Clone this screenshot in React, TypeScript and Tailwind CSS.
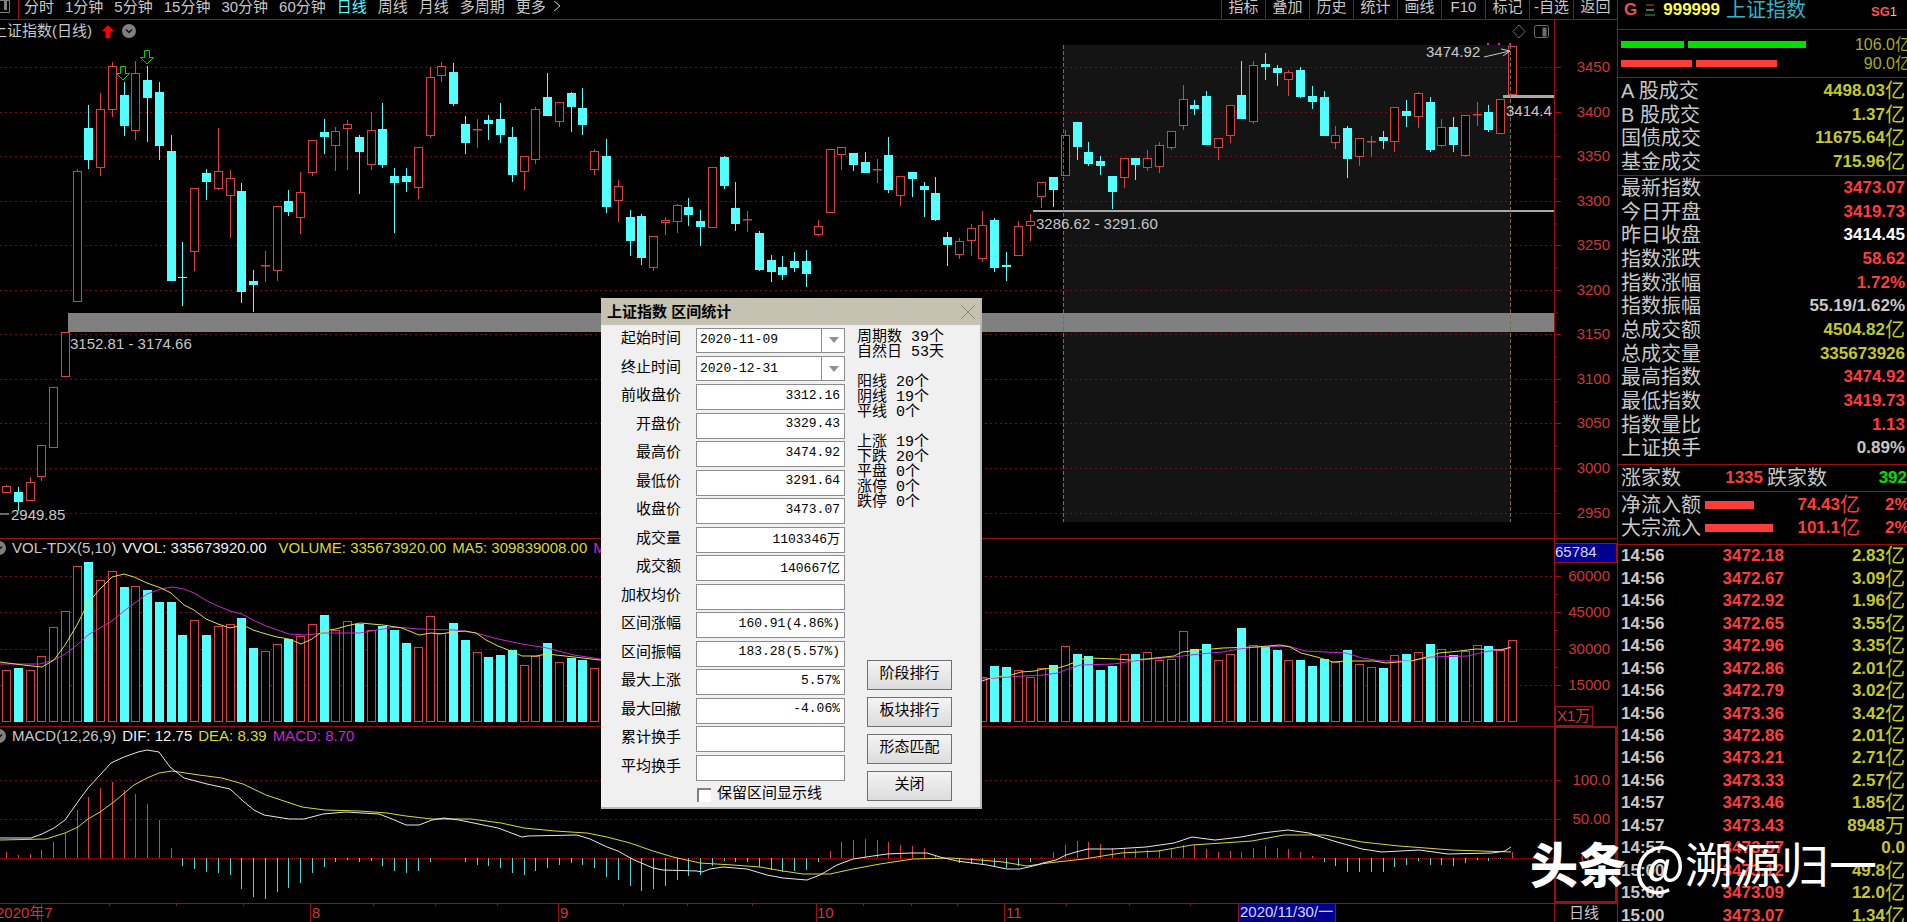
import { useState } from "react";

const UP = "#d94040";
const DOWN = "#54ffff";
const LINE = "#9a1010";
const GRID = "#6e1018";
const AXIS = "#cc3838";

const FIRST_X = 6;
const STEP = 11.765;

// [rising, high, body top, body bottom, low]
const candles = [
  [1, 485, 486, 493, 493], [0, 487, 492, 502, 511], [1, 477, 482, 501, 501], [1, 445, 445, 477, 481],
  [1, 387, 387, 448, 448], [1, 332, 332, 377, 377], [1, 169, 171, 302, 302], [0, 105, 128, 160, 169],
  [1, 93, 109, 168, 176], [1, 62, 66, 110, 117], [0, 82, 95, 126, 136], [1, 61, 73, 131, 140],
  [0, 66, 80, 98, 142], [0, 82, 92, 146, 160], [0, 135, 151, 281, 281], [0, 242, 277, 278, 306],
  [1, 188, 188, 252, 271], [0, 169, 173, 182, 200], [1, 128, 171, 189, 190], [1, 170, 178, 196, 238],
  [0, 183, 191, 292, 303], [0, 270, 281, 285, 312], [1, 251, 265, 267, 282], [1, 206, 206, 271, 281],
  [0, 190, 201, 212, 216], [1, 172, 192, 218, 234], [1, 140, 140, 173, 176], [0, 119, 132, 137, 154],
  [1, 127, 131, 146, 171], [1, 120, 124, 129, 170], [0, 135, 137, 152, 194], [1, 112, 130, 165, 170],
  [0, 103, 129, 165, 168], [0, 168, 176, 183, 233], [0, 168, 176, 182, 192], [1, 147, 147, 188, 199],
  [1, 67, 77, 136, 138], [1, 62, 66, 76, 82], [0, 63, 72, 104, 106], [0, 116, 124, 143, 154],
  [1, 119, 129, 131, 148], [0, 115, 120, 124, 140], [0, 103, 119, 135, 143], [0, 127, 137, 175, 182],
  [1, 156, 156, 172, 190], [1, 107, 109, 160, 164], [0, 73, 97, 116, 116], [1, 102, 102, 122, 127],
  [0, 92, 93, 107, 132], [0, 88, 108, 125, 135], [1, 149, 151, 170, 175], [0, 139, 156, 207, 213],
  [1, 180, 186, 201, 222], [0, 210, 217, 241, 256], [0, 214, 216, 258, 265], [1, 236, 236, 268, 271],
  [1, 217, 220, 223, 235], [1, 204, 205, 222, 233], [0, 198, 207, 215, 226], [0, 210, 221, 227, 246],
  [1, 167, 167, 228, 228], [0, 156, 157, 186, 189], [0, 182, 208, 224, 231], [1, 211, 219, 220, 232],
  [0, 231, 233, 270, 271], [0, 255, 260, 272, 282], [0, 256, 267, 275, 280], [0, 252, 261, 268, 272],
  [0, 250, 261, 274, 287], [1, 220, 226, 235, 236], [1, 149, 149, 213, 213], [1, 147, 147, 155, 170],
  [0, 153, 153, 165, 171], [0, 152, 162, 173, 173], [1, 159, 169, 171, 183], [0, 137, 155, 190, 193],
  [1, 176, 176, 196, 206], [0, 172, 172, 179, 197], [0, 182, 186, 190, 217], [0, 177, 193, 220, 221],
  [0, 232, 237, 245, 266], [1, 238, 241, 255, 259], [1, 224, 228, 241, 256], [1, 211, 225, 259, 262],
  [0, 218, 220, 268, 272], [0, 252, 265, 267, 281], [1, 221, 226, 256, 256], [1, 214, 221, 226, 241],
  [1, 182, 182, 197, 208], [0, 177, 177, 190, 207], [1, 130, 135, 176, 176], [0, 122, 122, 147, 160],
  [0, 142, 152, 164, 166], [0, 156, 161, 166, 175], [0, 176, 176, 192, 209], [1, 158, 158, 178, 188],
  [0, 158, 158, 165, 180], [1, 150, 158, 168, 171], [1, 142, 145, 167, 173], [1, 131, 131, 148, 150],
  [1, 85, 99, 126, 130], [0, 100, 105, 109, 115], [0, 91, 96, 145, 145], [1, 138, 138, 148, 160],
  [1, 105, 105, 136, 143], [0, 61, 95, 119, 119], [1, 61, 65, 122, 124], [0, 53, 64, 67, 80],
  [0, 65, 68, 73, 86], [1, 70, 72, 80, 96], [0, 67, 70, 97, 98], [0, 86, 96, 102, 109],
  [0, 91, 97, 136, 136], [1, 126, 135, 143, 149], [0, 126, 128, 159, 178], [1, 138, 138, 157, 166],
  [1, 136, 141, 142, 157], [0, 131, 137, 141, 149], [1, 107, 107, 142, 152], [0, 100, 111, 116, 127],
  [1, 92, 93, 117, 128], [0, 97, 102, 150, 152], [1, 119, 127, 146, 147], [0, 117, 127, 145, 152],
  [1, 115, 115, 156, 157], [1, 102, 114, 115, 126], [0, 105, 112, 130, 132], [1, 99, 99, 134, 134],
  [1, 46, 46, 95, 95],
];

const volumes = [
  670, 668, 670, 656, 627, 611, 566, 562, 580, 571, 587, 586, 590, 602, 602, 635, 620, 635, 626, 624,
  618, 648, 651, 644, 639, 636, 624, 615, 630, 621, 624, 630, 626, 630, 643, 647, 616, 633, 623, 640,
  652, 657, 655, 650, 665, 656, 643, 662, 658, 660, 668, 655, 664, 658, 650, 668, 672, 668, 670, 672,
  655, 660, 668, 674, 660, 672, 678, 680, 676, 670, 645, 655, 662, 664, 670, 655, 662, 668, 672, 660,
  668, 680, 676, 677, 666, 667, 670, 677, 668, 665, 646, 654, 656, 670, 666, 654, 654, 652, 660, 659,
  631, 649, 644, 660, 654, 628, 645, 647, 650, 660, 660, 666, 659, 662, 650, 664, 667, 668, 655, 654,
  652, 644, 649, 655, 651, 645, 646, 650, 640,
];

const macdEnds = [
  852, 855, 854, 850, 842, 833, 810, 797, 788, 782, 790, 794, 804, 820, 848, 866, 869, 872, 873, 875,
  889, 897, 899, 892, 888, 883, 873, 867, 862, 860, 862, 861, 866, 871, 873, 871, 862, 858, 858, 862,
  865, 866, 868, 873, 875, 871, 868, 865, 863, 865, 868, 877, 880, 886, 891, 889, 886, 880, 876, 875,
  866, 861, 862, 862, 867, 870, 872, 871, 870, 862, 851, 842, 840, 839, 840, 842, 845, 846, 848, 856,
  859, 863, 864, 864, 867, 868, 866, 862, 857, 852, 845, 841, 842, 844, 848, 848, 849, 850, 850, 849,
  845, 845, 849, 852, 851, 852, 848, 846, 848, 849, 852, 856, 862, 866, 872, 872, 872, 872, 867, 865,
  861, 865, 865, 866, 863, 860, 861, 859, 852,
];

const ma5 =
  "0,662 23,665 42,667 54,660 65,645 77,625 88,603 100,589 112,577 124,574 134,577 147,583 161,588 171,593 184,605 194,610 206,619 218,624 230,628 243,625 253,630 266,634 277,637 289,639 301,644 312,639 323,631 336,629 346,626 360,623 383,625 402,628 419,635 431,633 440,634 453,632 465,631 476,633 486,640 498,646 511,651 522,656 536,656 547,654 574,657 600,660 700,664 820,668 900,664 982,681 994,677 1011,675 1021,672 1035,671 1043,669 1058,668 1068,665 1082,659 1090,658 1117,659 1129,660 1146,659 1174,656 1182,652 1199,650 1223,648 1256,647 1280,645 1290,647 1301,653 1317,657 1333,662 1346,661 1374,661 1386,663 1411,661 1423,658 1439,653 1460,651 1476,649 1501,650 1511,647";
const ma10 =
  "0,664 40,664 54,660 65,654 77,645 88,635 100,628 112,621 124,611 136,602 147,594 161,589 172,587 184,589 194,593 207,601 218,606 230,611 242,614 253,620 266,626 289,634 306,635 323,633 360,633 371,631 383,629 396,627 419,629 455,630 476,633 498,639 522,644 547,648 574,655 600,659 700,664 820,670 900,668 982,679 1023,676 1043,675 1058,673 1068,669 1080,665 1113,664 1141,660 1174,657 1199,654 1223,652 1239,649 1256,647 1288,646 1305,651 1346,653 1362,658 1382,661 1411,661 1431,657 1468,656 1484,652 1511,648";
const dif =
  "0,838 31,838 42,834 54,828 65,820 77,803 88,788 100,775 111,763 124,757 138,752 147,750 159,752 170,767 184,778 207,784 230,789 243,801 254,810 264,815 289,819 304,819 323,814 346,812 379,814 392,819 406,825 419,825 432,820 444,818 459,820 498,828 522,837 528,836 577,835 590,839 607,847 618,851 632,859 653,868 663,870 697,871 702,872 710,869 723,867 747,869 767,875 783,878 807,880 820,875 837,865 853,859 873,856 887,854 910,853 927,853 940,857 957,861 987,865 1007,869 1020,869 1037,865 1043,863 1056,860 1066,855 1076,852 1088,849 1113,849 1146,847 1174,843 1192,837 1215,840 1241,837 1262,833 1288,830 1309,833 1321,837 1337,842 1362,849 1382,852 1419,850 1448,854 1492,853 1505,851 1511,847";
const dea =
  "0,840 46,839 65,833 78,827 88,819 100,812 115,801 134,785 147,778 159,773 172,771 199,775 222,778 243,784 266,795 302,807 325,810 360,811 387,813 406,816 432,819 471,819 501,823 524,828 555,831 587,833 607,837 630,843 653,851 673,857 700,863 733,865 760,867 783,871 803,874 830,874 853,869 880,864 913,859 950,858 980,860 1003,862 1027,866 1048,863 1084,859 1121,853 1158,851 1192,845 1252,841 1284,835 1325,835 1362,842 1399,846 1452,850 1511,852";

const periods = ["分时", "1分钟", "5分钟", "15分钟", "30分钟", "60分钟", "日线", "周线", "月线", "多周期", "更多"];
const tools = ["指标", "叠加", "历史", "统计", "画线", "F10", "标记", "-自选", "返回"];

const turnover = [
  ["A 股成交", "4498.03", "亿"],
  ["B 股成交", "1.37", "亿"],
  ["国债成交", "11675.64", "亿"],
  ["基金成交", "715.96", "亿"],
];

const quotes = [
  ["最新指数", "3473.07", "", "text-[#ff3c3c]"],
  ["今日开盘", "3419.73", "", "text-[#ff3c3c]"],
  ["昨日收盘", "3414.45", "", "text-white"],
  ["指数涨跌", "58.62", "", "text-[#ff3c3c]"],
  ["指数涨幅", "1.72%", "", "text-[#ff3c3c]"],
  ["指数振幅", "55.19/1.62%", "", "text-[#c8c8c8]"],
  ["总成交额", "4504.82", "亿", "text-[#c4c828]"],
  ["总成交量", "335673926", "", "text-[#c4c828]"],
  ["最高指数", "3474.92", "", "text-[#ff3c3c]"],
  ["最低指数", "3419.73", "", "text-[#ff3c3c]"],
  ["指数量比", "1.13", "", "text-[#ff3c3c]"],
  ["上证换手", "0.89%", "", "text-[#c8c8c8]"],
];

const ticks = [
  ["14:56", "3472.18", "2.83", "亿"],
  ["14:56", "3472.67", "3.09", "亿"],
  ["14:56", "3472.92", "1.96", "亿"],
  ["14:56", "3472.65", "3.55", "亿"],
  ["14:56", "3472.96", "3.35", "亿"],
  ["14:56", "3472.86", "2.01", "亿"],
  ["14:56", "3472.79", "3.02", "亿"],
  ["14:56", "3473.36", "3.42", "亿"],
  ["14:56", "3472.86", "2.01", "亿"],
  ["14:56", "3473.21", "2.71", "亿"],
  ["14:56", "3473.33", "2.57", "亿"],
  ["14:57", "3473.46", "1.85", "亿"],
  ["14:57", "3473.43", "8948", "万"],
  ["14:57", "3473.57", "0.0", ""],
  ["15:00", "3473.12", "49.8", "亿"],
  ["15:00", "3473.09", "12.0", "亿"],
  ["15:00", "3473.07", "1.34", "亿"],
];

const stats = [
  ["前收盘价", "3312.16"],
  ["开盘价", "3329.43"],
  ["最高价", "3474.92"],
  ["最低价", "3291.64"],
  ["收盘价", "3473.07"],
  ["成交量", "1103346万"],
  ["成交额", "140667亿"],
  ["加权均价", ""],
  ["区间涨幅", "160.91(4.86%)"],
  ["区间振幅", "183.28(5.57%)"],
  ["最大上涨", "5.57%"],
  ["最大回撤", "-4.06%"],
  ["累计换手", ""],
  ["平均换手", ""],
];

const summary = `周期数 39个
自然日 53天

阳线 20个
阴线 19个
平线 0个

上涨 19个
下跌 20个
平盘 0个
涨停 0个
跌停 0个`;

const xAt = (i: number) => Math.round(FIRST_X + i * STEP);

function GridLine({ y, label }: { y: number; label?: string }) {
  return (
    <g>
      <line x1="0" x2="1554" y1={y + 0.5} y2={y + 0.5} stroke={GRID} strokeDasharray="2 3" />
      <line x1="1554" x2="1561" y1={y + 0.5} y2={y + 0.5} stroke={LINE} />
      {label && (
        <text x="1610" y={y + 5} textAnchor="end" fill={AXIS}>
          {label}
        </text>
      )}
    </g>
  );
}

function PriceChart() {
  const levels = Array.from({ length: 11 }, (_, i) => 3450 - i * 50);
  return (
    <svg viewBox="0 20 1617 518" preserveAspectRatio="xMaxYMin slice" className="block h-full w-full text-[15px]">
      <rect x="1064" y="45" width="446" height="477" fill="#141414" />
      {levels.map((p, i) => (
        <g key={p}>
          <GridLine y={Math.round(67 + i * 44.55)} label={String(p)} />
          <line x1="1554" x2="1558" y1={Math.round(90 + i * 44.55)} y2={Math.round(90 + i * 44.55)} stroke={LINE} />
        </g>
      ))}
      <rect x="68" y="313" width="1486" height="19" fill="#808080" />
      <rect x="1033" y="210" width="521" height="2" fill="#a8a8a8" />
      <rect x="1503" y="95" width="51" height="3" fill="#a8a8a8" />
      {candles.map(([up, high, top, bottom, low], i) => {
        const x = xAt(i);
        if (up) {
          return (
            <g key={i} stroke={UP} fill="#000">
              <line x1={x + 0.5} x2={x + 0.5} y1={high} y2={low} />
              {bottom - top < 3 ? (
                <rect x={x - 4} y={top} width="9" height="1.5" fill={UP} stroke="none" />
              ) : (
                <rect x={x - 3.5} y={top + 0.5} width="8" height={bottom - top - 1} />
              )}
            </g>
          );
        }
        return (
          <g key={i} fill={DOWN}>
            <rect x={x} y={high} width="1" height={low - high} />
            <rect x={x - 4} y={top} width="9" height={bottom - top} />
          </g>
        );
      })}
      <g stroke="#7d6a50" strokeDasharray="4 2">
        <line x1="1063.5" x2="1063.5" y1="45" y2="522" />
        <line x1="1510.5" x2="1510.5" y1="45" y2="522" />
      </g>
      <g fill="none" stroke="#10c810">
        <path d="M120.5 66.5h5v7h4l-6.5 6.500l-6.500-6.500h4z" />
        <path d="M144.500 50.500h5v7h4l-6.500 6.500l-6.500-6.500h4z" />
      </g>
      <g fill="#c8c8c8">
        <text x="70" y="349">3152.81 - 3174.66</text>
        <text x="11" y="520">2949.85</text>
        <text x="1036" y="229">3286.62 - 3291.60</text>
        <text x="1426" y="57">3474.92</text>
        <text x="1506" y="116">3414.4</text>
      </g>
      <path d="M0 514h9M1484 57l26-6m-9-2l9 2l-7 5" stroke="#c8c8c8" fill="none" />
      <path d="M1487 44h2m9 0h2m9 0h2" stroke="#d020d0" strokeWidth="2" />
      <g fill="none" stroke="#6c6c6c">
        <path d="M1519 25l6 6.500l-6 6.500l-6-6.500z" />
        <rect x="1534.500" y="25.500" width="14" height="12" rx="2" />
        <rect x="1543" y="28" width="3" height="8" fill="#6c6c6c" />
      </g>
      <path d="M1554.500 20V538" stroke={LINE} />
    </svg>
  );
}

function VolumeChart() {
  return (
    <svg viewBox="0 538 1617 188" preserveAspectRatio="xMaxYMin slice" className="block h-full w-full text-[15px]">
      <path d="M0 537.500H1617" stroke={LINE} />
      <path d="M0 538.500H1617" stroke={LINE} />
      <GridLine y={576} label="60000" />
      <GridLine y={612} label="45000" />
      <GridLine y={649} label="30000" />
      <GridLine y={685} label="15000" />
      {volumes.map((top, i) =>
        candles[i][0] ? (
          <rect key={i} x={xAt(i) - 3.5} y={top + 0.5} width="8" height={721 - top} fill="#000" stroke={UP} />
        ) : (
          <rect key={i} x={xAt(i) - 4} y={top} width="9" height={722 - top} fill={DOWN} />
        )
      )}
      <polyline points={ma10} fill="none" stroke="#c828d0" />
      <polyline points={ma5} fill="none" stroke="#e0e040" />
      <rect x="1554.500" y="543.500" width="62" height="19" fill="#000090" stroke={LINE} />
      <text x="1555" y="557" fill="#d8d8f0">65784</text>
      <rect x="1555.500" y="706.500" width="37" height="19" fill="none" stroke={LINE} />
      <text x="1557" y="721" fill={AXIS}>X1万</text>
      <path d="M1554.500 538V726M1554 594.500h4M1554 630.500h4M1554 667.500h4" stroke={LINE} />
    </svg>
  );
}

function MacdChart() {
  return (
    <svg viewBox="0 726 1617 177" preserveAspectRatio="xMaxYMin slice" className="block h-full w-full text-[15px]">
      <path d="M0 726.500H1617" stroke={LINE} />
      <GridLine y={780} label="100.0" />
      <GridLine y={819} label="50.00" />
      <line x1="0" x2="1554" y1="858.500" y2="858.500" stroke={LINE} strokeDasharray="1 1" />
      {macdEnds.map((end, i) => (
        <line
          key={i}
          x1={xAt(i) + 0.5}
          x2={xAt(i) + 0.5}
          y1="858"
          y2={end}
          stroke={end < 858 ? UP : "#4cd8d8"}
        />
      ))}
      <polyline points={dea} fill="none" stroke="#d8d838" />
      <polyline points={dif} fill="none" stroke="#e8e8e8" />
      <rect x="1555" y="727" width="61" height="175" fill="none" stroke={LINE} strokeWidth="2" />
      <text x="1610" y="863" textAnchor="end" fill={AXIS}>0.00</text>
    </svg>
  );
}

function TimeAxis() {
  const minor = [109, 176, 243, 373, 435, 497, 623, 687, 752, 863, 911, 957, 1066, 1129, 1190];
  return (
    <svg viewBox="0 903 1617 19" preserveAspectRatio="xMaxYMin slice" className="block h-full w-full text-[15px]">
      <path d="M0 903.500H1617M1554.500 903V922" stroke={LINE} />
      {minor.map((x) => (
        <line key={x} x1={x + 0.5} x2={x + 0.5} y1="903" y2="906" stroke={LINE} />
      ))}
      {[41, 310, 558, 816, 1004].map((x) => (
        <line key={x} x1={x + 0.5} x2={x + 0.5} y1="903" y2="922" stroke={LINE} />
      ))}
      <g fill={AXIS}>
        <text x="-4" y="918">2020年7</text>
        <text x="312" y="918">8</text>
        <text x="560" y="918">9</text>
        <text x="817" y="918">10</text>
        <text x="1006" y="918">11</text>
      </g>
      <rect x="1238.500" y="903.500" width="97" height="19" fill="#000090" stroke={LINE} />
      <text x="1240" y="917" fill="#d8d8f0">2020/11/30/一</text>
      <text x="1569" y="918" fill="#c8c8c8">日线</text>
    </svg>
  );
}

function PaneToggle() {
  return (
    <svg viewBox="0 0 14 14" className="size-3.5 shrink-0">
      <circle cx="7" cy="7" r="7" fill="#808080" />
      <path d="M4 5.500l3 3l3-3" fill="none" stroke="#111" strokeWidth="1.500" />
    </svg>
  );
}

function QuoteRow({ label, value, unit, color }: { label: string; value: string; unit: string; color: string }) {
  return (
    <div className="flex flex-1 items-center justify-between">
      <dt className="text-[20px] leading-5 whitespace-pre text-[#c8c8c8]">{label}</dt>
      <dd className={`flex items-center text-[17px] leading-5 font-bold ${color}`}>
        {value}
        <span className="text-[20px] font-normal">{unit}</span>
      </dd>
    </div>
  );
}

function SidePanel() {
  return (
    <aside className="flex w-[290px] shrink-0 flex-col overflow-hidden border-l border-[#9a1010]">
      <header className="flex h-[30px] shrink-0 items-start border-b border-[#9a1010] pl-1.5 text-[17px] leading-5 font-bold">
        <span className="text-[#e85050]">G</span>
        <svg viewBox="0 0 10 12" className="mt-1 ml-2 h-3 w-2.5">
          <path d="M1 1h8" stroke="#d04040" />
          <path d="M1 6h8" stroke="#c8c8c8" />
          <path d="M0 11h10" stroke="#10c810" />
        </svg>
        <span className="ml-2 text-[#ffff50]">999999</span>
        <span className="ml-1.5 text-[20px] font-normal text-[#28b8c8]">上证指数</span>
        <span className="mt-0.5 mr-2.5 ml-auto text-[13px] text-[#ff5050]">
          SG<span className="font-normal text-[#c8c8c8]">1</span>
        </span>
      </header>
      <div className="flex h-12 shrink-0 flex-col justify-center border-b border-[#9a1010] pl-[3px] text-[16px] leading-[19px] text-[#a8ac28]">
        <div className="flex items-center gap-1">
          <span className="h-[7px] w-[63px] bg-[#00e000]" />
          <span className="h-[7px] w-[118px] bg-[#00e000]" />
          <span className="-mr-1 ml-auto">106.0亿</span>
        </div>
        <div className="flex items-center gap-1">
          <span className="h-[7px] w-[71px] bg-[#ff3c3c]" />
          <span className="h-[7px] w-[81px] bg-[#ff3c3c]" />
          <span className="-mr-1 ml-auto">90.0亿</span>
        </div>
      </div>
      <dl className="flex h-[98px] shrink-0 flex-col border-b border-[#9a1010] py-px pr-0.5 pl-[3px]">
        {turnover.map(([label, value, unit]) => (
          <QuoteRow key={label} label={label} value={value} unit={unit} color="text-[#c4c828]" />
        ))}
      </dl>
      <dl className="flex h-[289px] shrink-0 flex-col border-b border-[#9a1010] pr-0.5 pb-1 pl-[3px]">
        {quotes.map(([label, value, unit, color]) => (
          <QuoteRow key={label} label={label} value={value} unit={unit} color={color} />
        ))}
      </dl>
      <div className="flex h-[27px] shrink-0 items-center border-b border-[#9a1010] pl-[3px] text-[20px] leading-5 text-[#c8c8c8]">
        <span>涨家数</span>
        <span className="w-[82px] text-right text-[17px] font-bold text-[#ff3c3c]">1335</span>
        <span className="ml-1">跌家数</span>
        <span className="ml-auto text-[17px] font-bold text-[#00e000]">392</span>
      </div>
      <div className="flex h-[53px] shrink-0 flex-col border-b border-[#9a1010] pt-px pb-1 pl-[3px] text-[20px] leading-5 text-[#c8c8c8]">
        <div className="flex flex-1 items-center">
          <span>净流入额</span>
          <span className="ml-1 w-[75px]">
            <span className="block h-2 w-[49px] bg-[#ff3c3c]" />
          </span>
          <span className="flex flex-1 items-center justify-end text-[17px] font-bold text-[#ff3c3c]">
            74.43<span className="text-[20px] font-normal">亿</span>
          </span>
          <span className="w-[47px] pl-[25px] text-[17px] font-bold text-[#ff3c3c]">2%</span>
        </div>
        <div className="flex flex-1 items-center">
          <span>大宗流入</span>
          <span className="ml-1 w-[75px]">
            <span className="block h-2 w-[68px] bg-[#ff3c3c]" />
          </span>
          <span className="flex flex-1 items-center justify-end text-[17px] font-bold text-[#ff3c3c]">
            101.1<span className="text-[20px] font-normal">亿</span>
          </span>
          <span className="w-[47px] pl-[25px] text-[17px] font-bold text-[#ff3c3c]">2%</span>
        </div>
      </div>
      <table className="h-[382px] w-full shrink-0 text-[17px] leading-5 font-bold">
        <tbody>
          {ticks.map(([time, price, amount, unit], i) => (
            <tr key={i}>
              <td className="p-0 pl-[3px] text-[#c8c8c8]">{time}</td>
              <td className="w-[100px] p-0 text-right text-[#ff3c3c]">{price}</td>
              <td className="w-[123px] p-0 pr-0.5">
                <span className="flex items-center justify-end text-[#c4c828]">
                  {amount}
                  <span className="text-[20px] font-normal">{unit}</span>
                </span>
              </td>
            </tr>
          ))}
        </tbody>
      </table>
    </aside>
  );
}

function DateField({ id, label, value }: { id: string; label: string; value: string }) {
  return (
    <div className="flex flex-1 items-center">
      <label htmlFor={id} className="w-20 text-right">
        {label}
      </label>
      <div className="relative ml-[15px] w-[149px]">
        <select
          id={id}
          defaultValue={value}
          className="block h-[25px] w-full appearance-none border border-[#8c8c8c] bg-white pl-[3px] text-[13px] outline-none"
        >
          <option>{value}</option>
        </select>
        <span className="pointer-events-none absolute inset-y-0 right-0 flex w-6 items-center justify-center border-l border-[#8c8c8c]">
          <svg viewBox="0 0 10 6" className="h-1.5 w-2.5">
            <path d="M0 0h10l-5 6z" fill="#909090" />
          </svg>
        </span>
      </div>
    </div>
  );
}

function RangeDialog({ onClose }: { onClose: () => void }) {
  const [keepLines, setKeepLines] = useState(false);
  const actions = ["阶段排行", "板块排行", "形态匹配"];
  const button =
    "h-[30px] w-[85px] border border-[#707070] bg-linear-to-b from-[#f4f4f4] to-[#dcdcdc] text-[15px] leading-5";

  return (
    <section
      role="dialog"
      aria-label="上证指数 区间统计"
      className="absolute top-[298px] left-[601px] w-[381px] border-r-2 border-b-2 border-[#b8b8b8] bg-[#f0f0f0] font-['Liberation_Mono','Noto_Sans_CJK_SC',monospace] text-[15px] leading-5 text-black"
    >
      <header className="flex h-[27px] items-center justify-between bg-[#c6c2b2] pr-1 pl-1.5">
        <h2 className="font-['Liberation_Sans','Noto_Sans_CJK_SC',sans-serif] font-bold">上证指数 区间统计</h2>
        <button aria-label="关闭窗口" onClick={onClose}>
          <svg viewBox="0 0 16 16" className="size-4">
            <path d="M1 1l14 14M15 1l-14 14" stroke="#8c8878" />
          </svg>
        </button>
      </header>
      <div className="flex">
        <div className="pt-px pb-0.5">
          <div className="flex h-[456px] flex-col">
            <DateField id="start" label="起始时间" value="2020-11-09" />
            <DateField id="end" label="终止时间" value="2020-12-31" />
            {stats.map(([label, value]) => (
              <div key={label} className="flex flex-1 items-center">
                <label htmlFor={label} className="w-20 text-right">
                  {label}
                </label>
                <input
                  id={label}
                  readOnly
                  value={value}
                  className="ml-[15px] h-[26px] w-[149px] border border-[#8c8c8c] bg-white px-1 pb-1 text-right text-[13px] outline-none"
                />
              </div>
            ))}
          </div>
          <label className="mt-[3px] ml-24 flex items-center gap-1.5">
            <input
              type="checkbox"
              checked={keepLines}
              onChange={(e) => setKeepLines(e.target.checked)}
              className="size-3.5 appearance-none border-t-2 border-l-2 border-[#808080] bg-white checked:bg-[#404040]"
            />
            保留区间显示线
          </label>
        </div>
        <div className="flex flex-col justify-between pt-[5px] pb-1.5 pl-3">
          <p className="leading-[15px] whitespace-pre">{summary}</p>
          <div className="ml-2.5 flex flex-col gap-[7px]">
            {actions.map((name) => (
              <button key={name} className={button}>
                {name}
              </button>
            ))}
            <button className={button} onClick={onClose}>
              关闭
            </button>
          </div>
        </div>
      </div>
    </section>
  );
}

export default function App() {
  const [period, setPeriod] = useState("日线");
  const [dialogOpen, setDialogOpen] = useState(true);

  return (
    <div className="relative flex h-screen overflow-hidden bg-black font-['Liberation_Sans','Noto_Sans_CJK_SC',sans-serif] text-[15px] text-[#c8c8c8]">
      <main className="flex min-w-0 flex-1 flex-col">
        <nav className="flex h-5 shrink-0 justify-between overflow-hidden border-b border-[#9a1010] leading-[14px]">
          <div className="flex">
            <div className="flex w-[19px] border-r border-[#9a1010]">
              <svg viewBox="0 0 10 13" className="h-[13px] w-2.5">
                <path d="M0 .5h9.500v12H0" fill="none" stroke="#808080" />
                <path d="M4 0h3v10H4z" fill="#808080" />
              </svg>
            </div>
            <div className="flex items-start gap-[11px] pl-[5px]">
              {periods.map((p) => (
                <button key={p} onClick={() => setPeriod(p)} className={p === period ? "text-[#54ffff]" : ""}>
                  {p}
                </button>
              ))}
              <svg viewBox="0 0 8 12" className="-ml-1 h-3 w-2">
                <path d="M1 1l6 5l-6 5" fill="none" stroke="#c8c8c8" />
              </svg>
            </div>
          </div>
          <div className="flex items-stretch">
            {tools.map((t) => (
              <button key={t} className="flex w-11 justify-center border-l border-[#9a1010]">
                {t}
              </button>
            ))}
          </div>
        </nav>

        <div className="relative min-h-0 flex-1">
          <PriceChart />
          <div className="absolute top-px -left-2 flex items-center leading-5">
            上证指数(日线)
            <svg viewBox="0 0 12 13" className="mr-2 ml-2.5 h-[13px] w-3">
              <path d="M6 0l6 6H8.500v7h-5V6H0z" fill="#ff0000" />
            </svg>
            <PaneToggle />
          </div>
        </div>

        <div className="relative h-[188px] shrink-0">
          <VolumeChart />
          <div className="absolute top-0 -left-2 flex w-[609px] items-center gap-1.5 overflow-hidden leading-5 whitespace-nowrap">
            <PaneToggle />
            <span>VOL-TDX(5,10)</span>
            <span className="mr-1.5 text-[#f0f0f0]">VVOL: 335673920.00</span>
            <span className="text-[#d8d838]">VOLUME: 335673920.00</span>
            <span className="text-[#d8d838]">MA5: 309839008.00</span>
            <span className="text-[#c828d0]">MA10</span>
          </div>
        </div>

        <div className="relative h-[177px] shrink-0">
          <MacdChart />
          <div className="absolute top-0 -left-2 flex items-center gap-1.5 leading-5 whitespace-nowrap">
            <PaneToggle />
            <span>MACD(12,26,9)</span>
            <span className="text-[#f0f0f0]">DIF: 12.75</span>
            <span className="text-[#d8d838]">DEA: 8.39</span>
            <span className="text-[#c828d0]">MACD: 8.70</span>
          </div>
        </div>

        <div className="h-[19px] shrink-0">
          <TimeAxis />
        </div>
      </main>

      <SidePanel />

      {dialogOpen && <RangeDialog onClose={() => setDialogOpen(false)} />}

      <p className="pointer-events-none absolute right-[30px] bottom-8 flex items-center gap-2 font-['Noto_Sans_CJK_SC',sans-serif] text-[48px] leading-[56px] text-white">
        <span className="font-black">头条</span>
        <span className="flex items-center">
          <span className="text-[54px]">@</span>溯源归一
        </span>
      </p>
    </div>
  );
}
